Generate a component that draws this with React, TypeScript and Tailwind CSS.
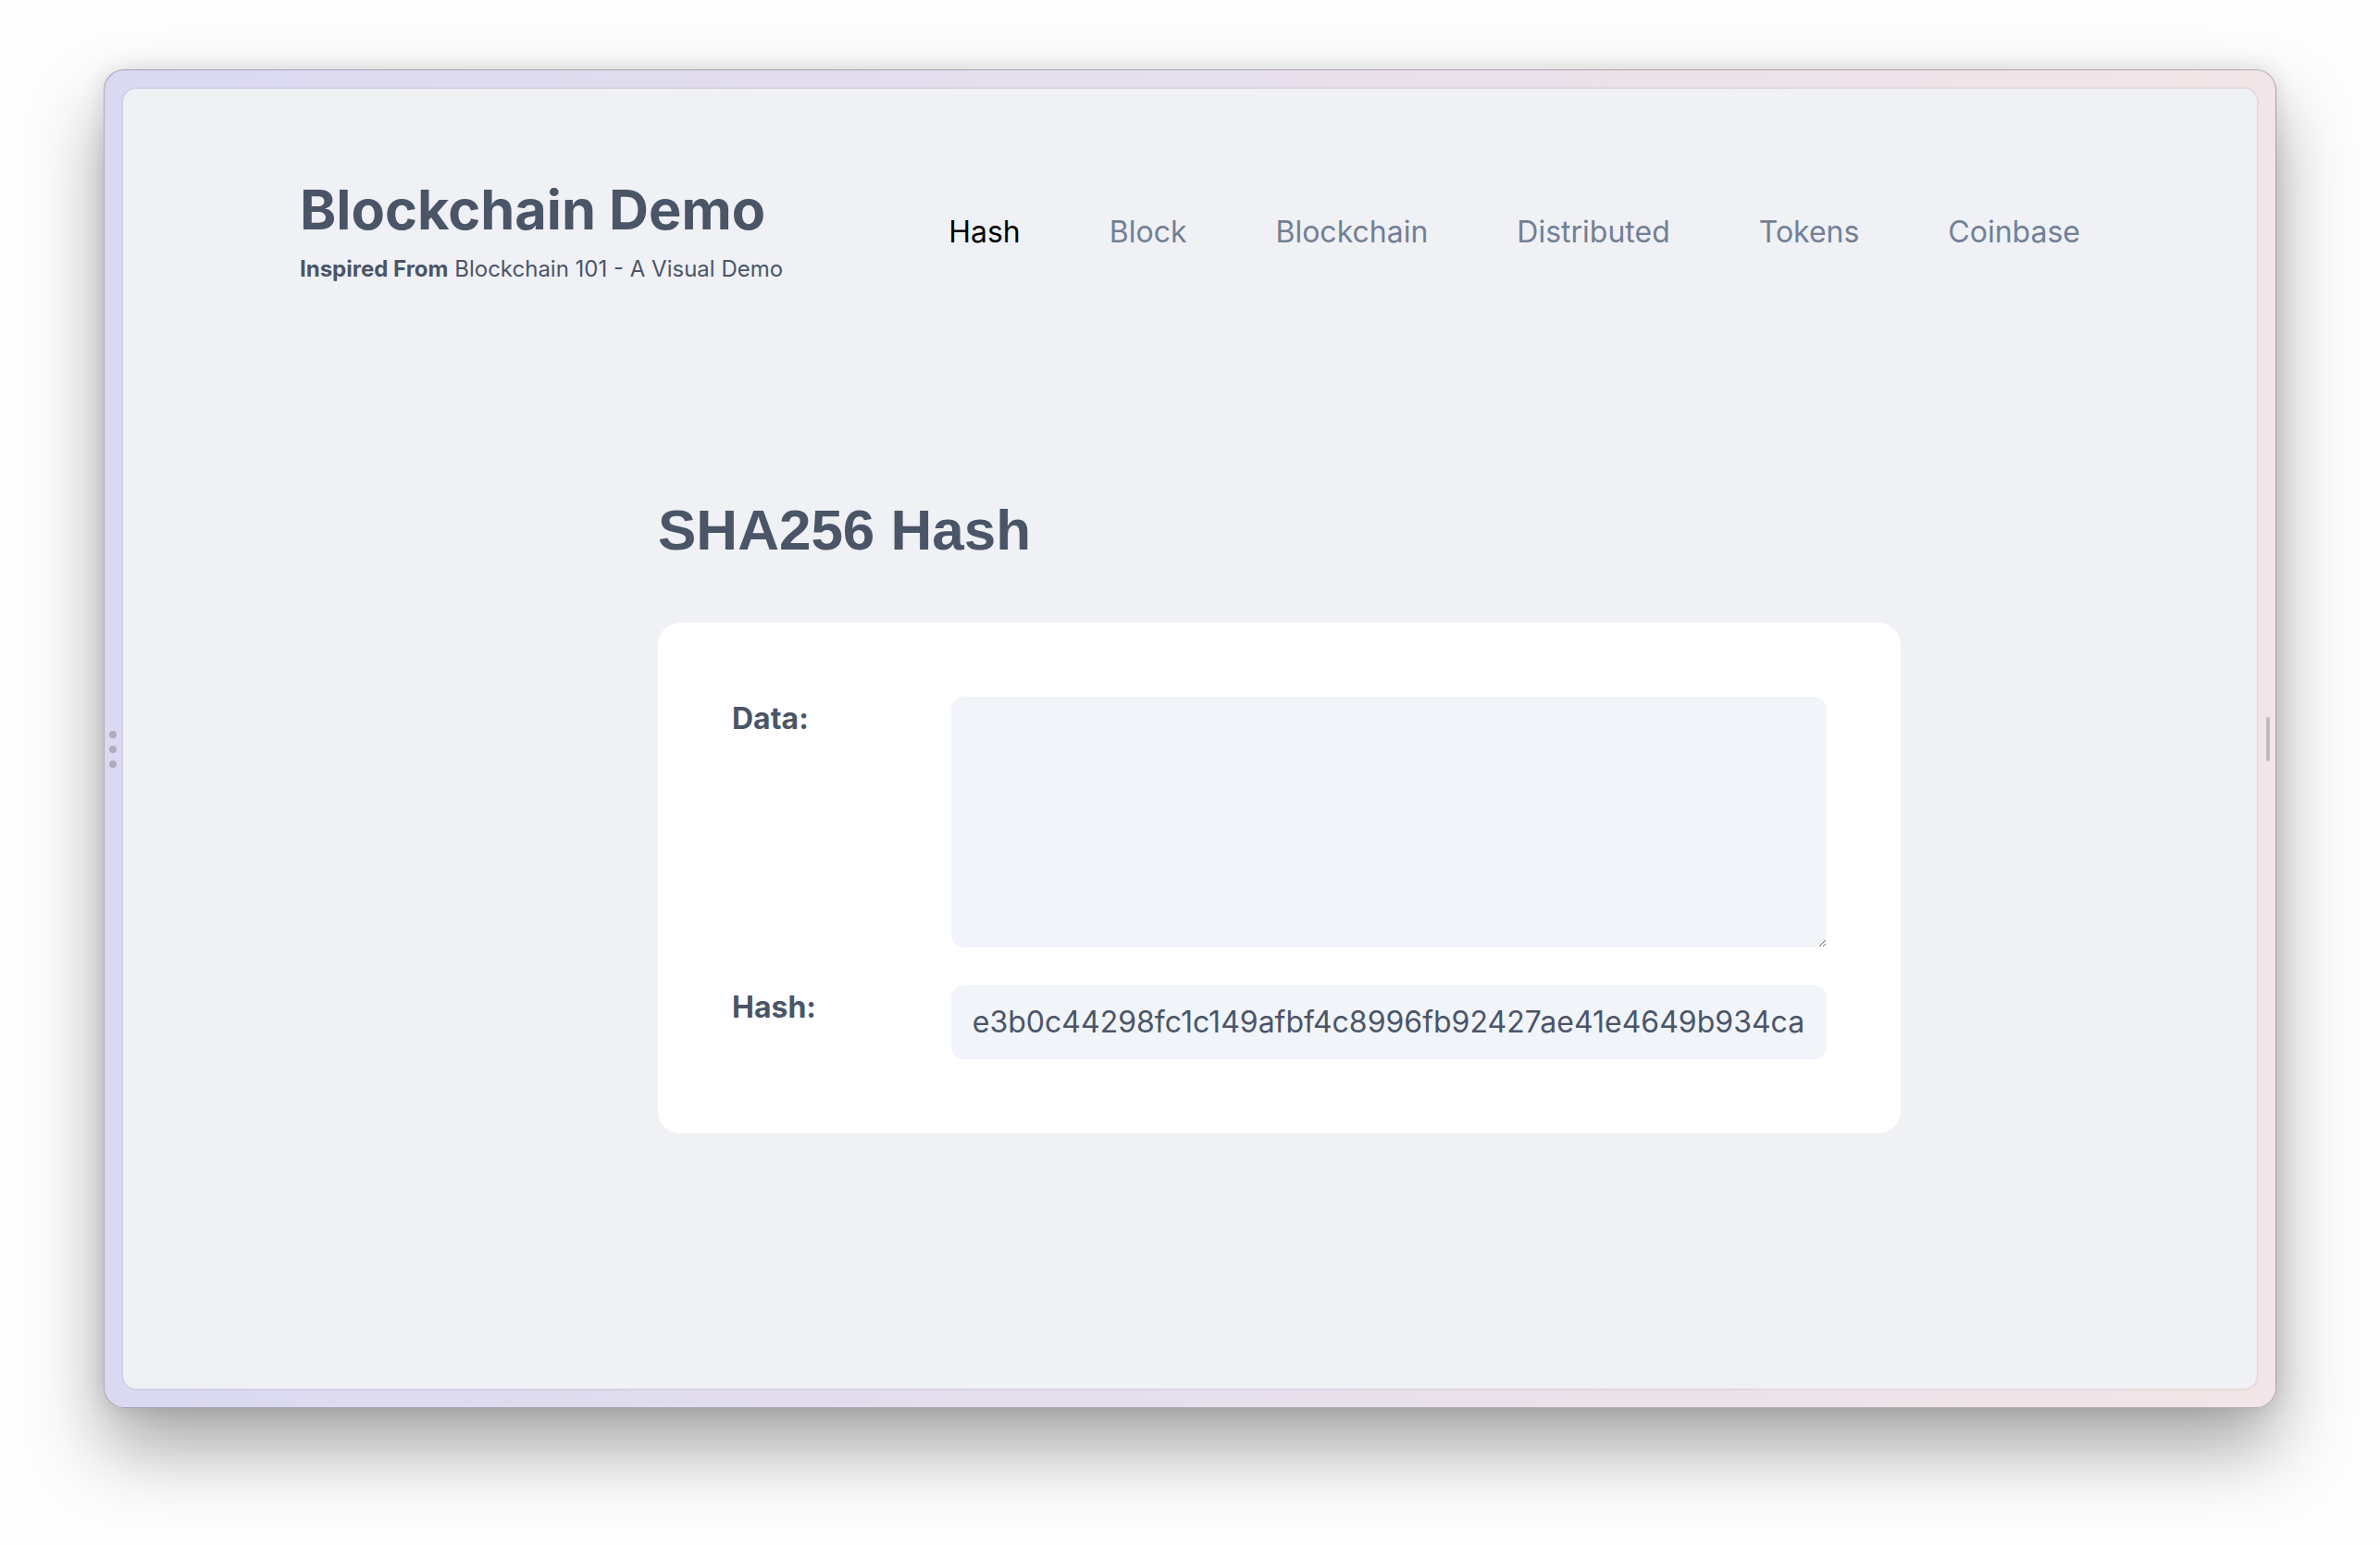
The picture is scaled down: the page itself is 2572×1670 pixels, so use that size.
const HASH =
  "e3b0c44298fc1c149afbf4c8996fb92427ae41e4649b934ca495991b7852b855";

const navItems = ["Hash", "Block", "Blockchain", "Distributed", "Tokens", "Coinbase"];

const App: React.FC = () => {
  return (
    <div className="w-[2572px] h-[1670px] bg-[#fdfdfd] pt-[75px] px-[112px] font-['Inter',sans-serif]">
      <div className="relative h-[1447px] rounded-[22px] border border-black/25 bg-gradient-to-r from-[#dad9f1] to-[#f2e5e7] p-[20px] shadow-[0_44px_80px_rgba(0,0,0,0.34),0_0_24px_rgba(0,0,0,0.12)]">
        {/* window handles */}
        <div className="absolute left-[5px] top-[714px] flex flex-col gap-[8px]">
          <span className="block w-[8px] h-[8px] rounded-full bg-[#aeaac0]" />
          <span className="block w-[8px] h-[8px] rounded-full bg-[#aeaac0]" />
          <span className="block w-[8px] h-[8px] rounded-full bg-[#aeaac0]" />
        </div>
        <div className="absolute right-[6px] top-[699px] w-[4px] h-[48px] rounded-full bg-[#c2baba]" />

        <div className="h-full rounded-[14px] bg-[#f0f1f5] shadow-[0_0_3px_rgba(0,0,0,0.18)] overflow-hidden">
          <header className="flex justify-between items-start pl-[191px] pr-[191px] pt-[95px]">
            <div>
              <h1 className="text-[59.5px] leading-[1.2] font-bold text-[#4a5568]">
                Blockchain Demo
              </h1>
              <p className="mt-[15px] text-[24px] leading-[1.2] text-[#4a5568]">
                <span className="font-bold">Inspired From</span> Blockchain 101 - A Visual Demo
              </p>
            </div>
            <nav className="flex gap-[96px] pt-[41px] text-[32px] leading-[1.2]">
              {navItems.map((item, i) => (
                <a
                  key={item}
                  href="#"
                  className={i === 0 ? "text-black" : "text-[#718096]"}
                >
                  {item}
                </a>
              ))}
            </nav>
          </header>

          <main className="pl-[578px] mt-[230px]">
            <h2 className="text-[62px] leading-[1.2] font-bold text-[#4a5568] font-['Liberation_Sans',Arial,sans-serif]">
              SHA256 Hash
            </h2>
            <div className="mt-[62px] w-[1343px] rounded-[24px] bg-white p-[80px]">
              <div className="flex">
                <label className="w-[237px] pt-[2px] text-[32px] leading-[1.4] font-bold text-[#4a5568]">
                  Data:
                </label>
                <textarea className="w-[947px] h-[271px] rounded-[14px] bg-[#f1f4f9] outline-none p-[22px] text-[32px] text-[#4a5568]" />
              </div>
              <div className="flex mt-[41px]">
                <label className="w-[237px] pt-[2px] text-[32px] leading-[1.4] font-bold text-[#4a5568]">
                  Hash:
                </label>
                <input
                  readOnly
                  value={HASH}
                  className="w-[947px] h-[80px] rounded-[14px] bg-[#f1f4f9] outline-none pl-[23px] pr-[23px] text-[32px] text-[#4a5568]"
                />
              </div>
            </div>
          </main>
        </div>
      </div>
    </div>
  );
};

export default App;
